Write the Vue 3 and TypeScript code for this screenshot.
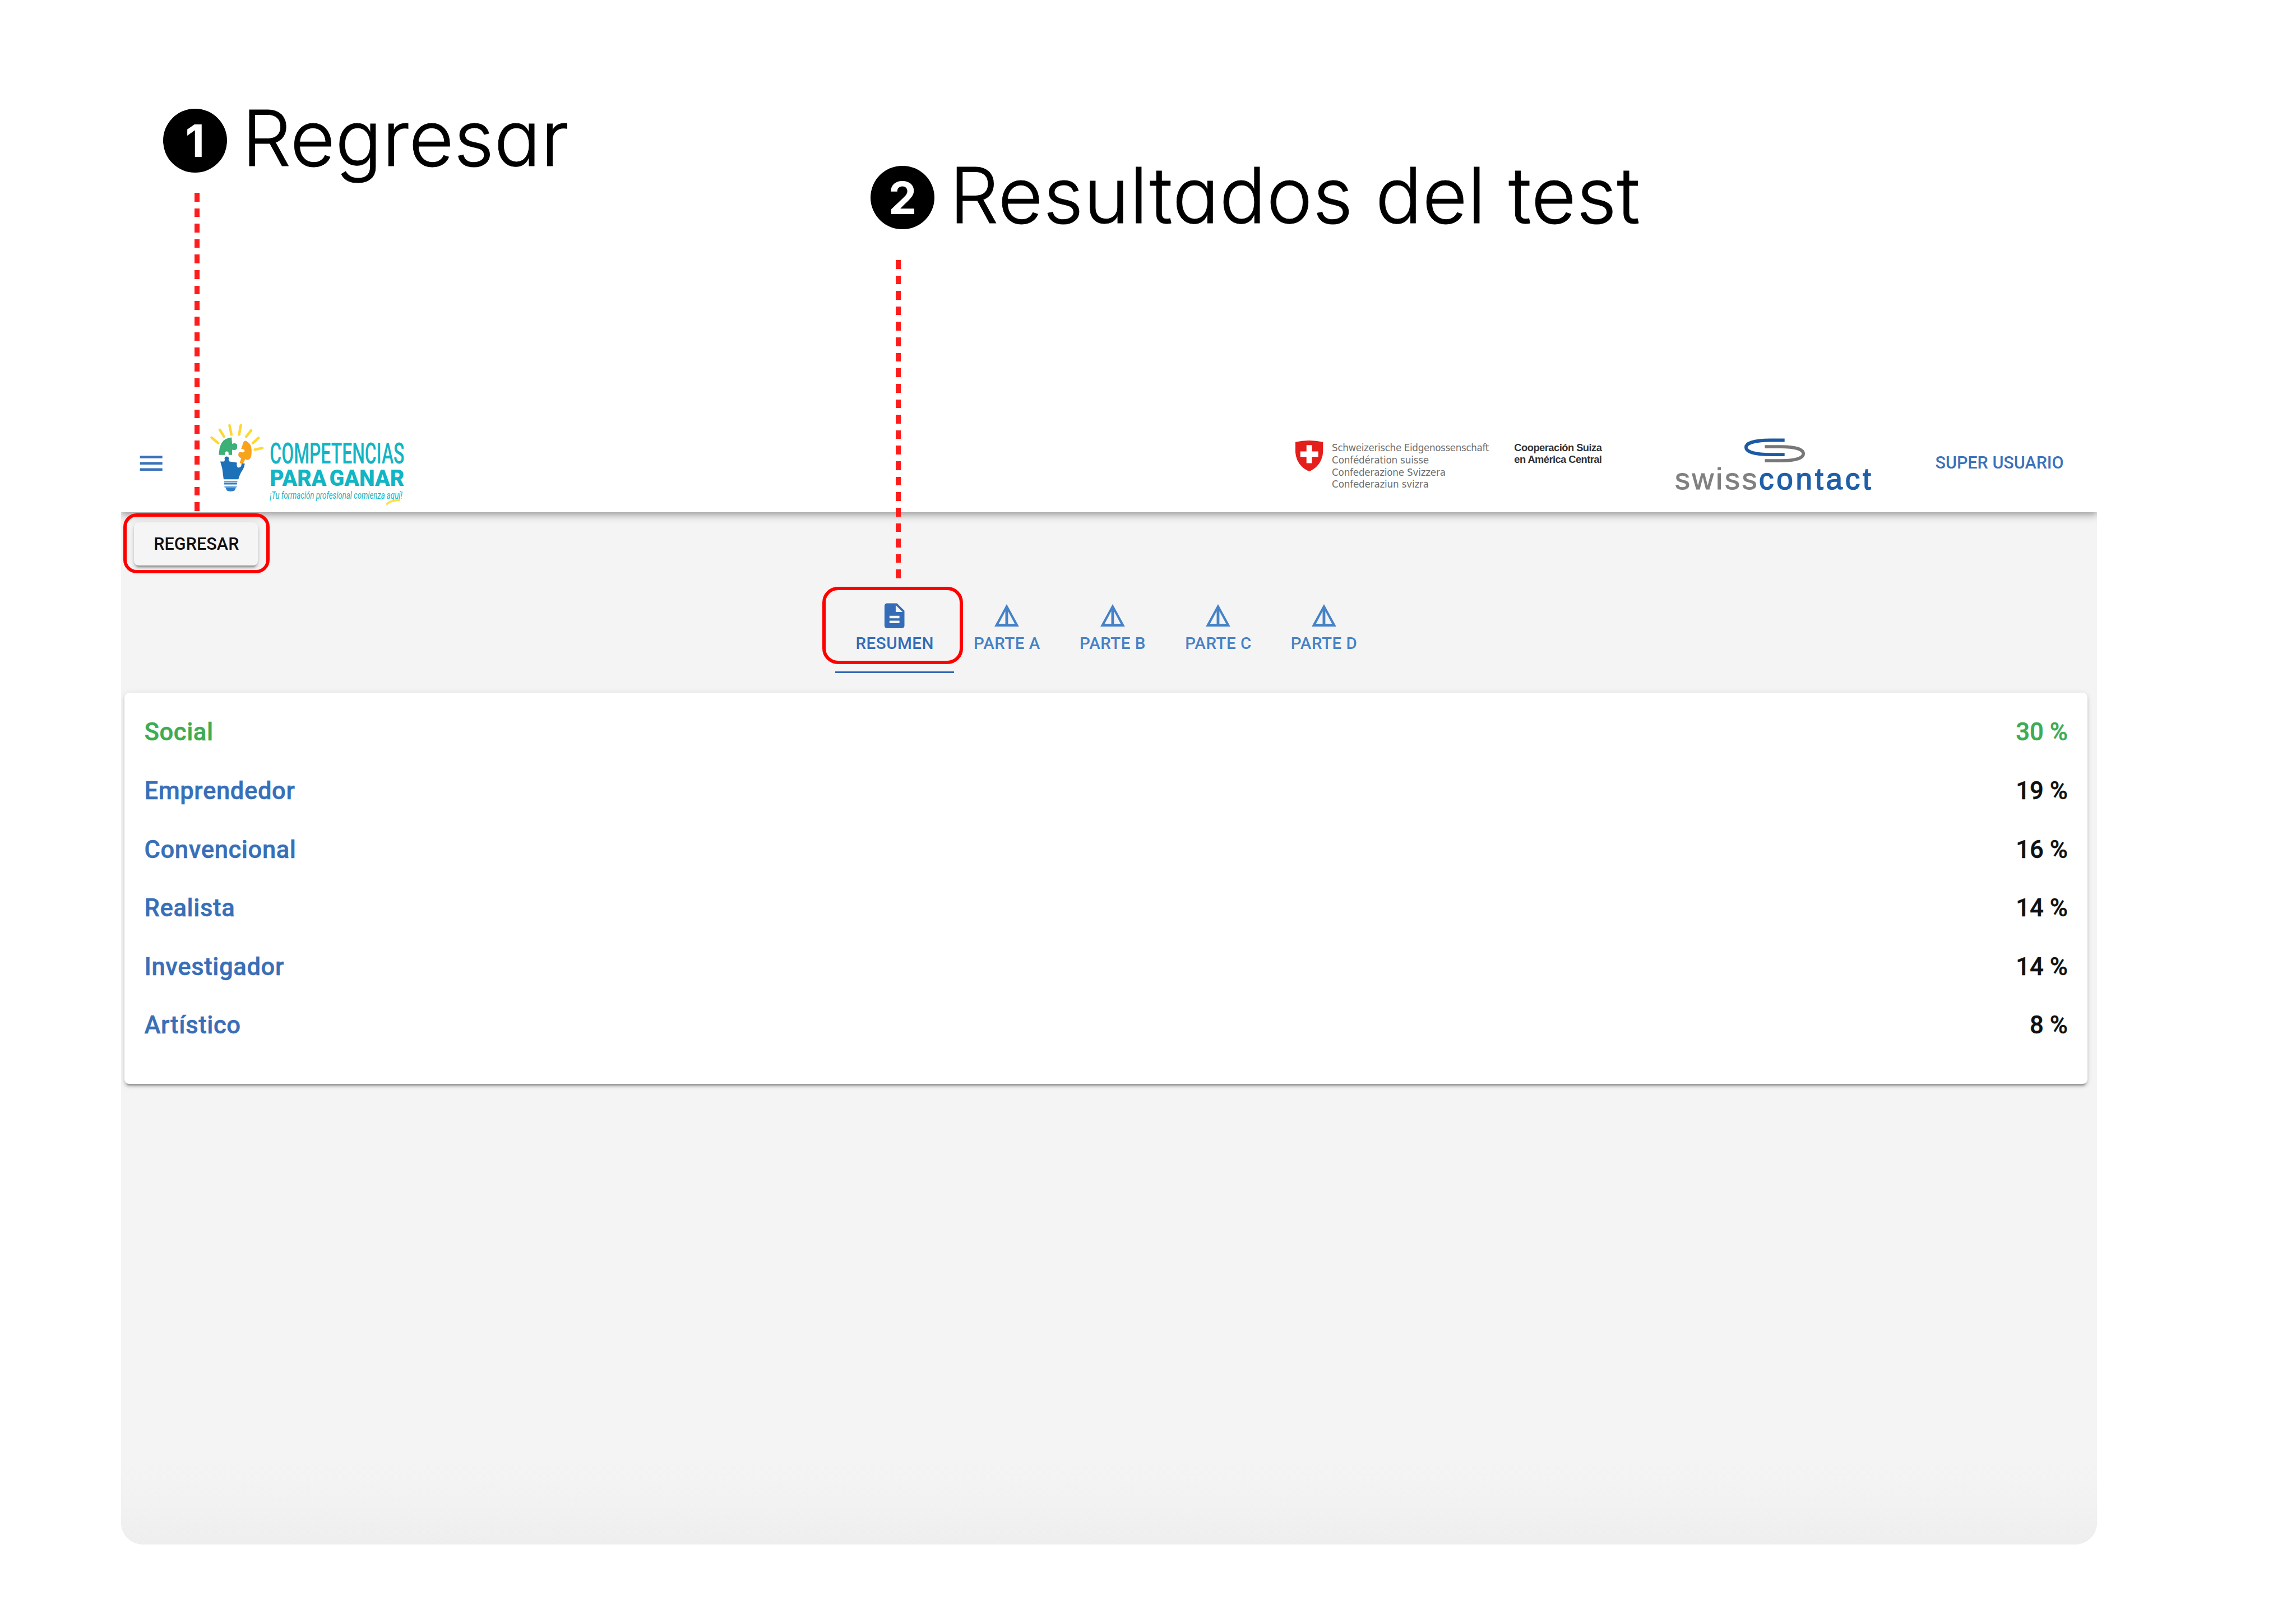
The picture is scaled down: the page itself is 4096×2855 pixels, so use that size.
<script setup lang="ts">
interface Tab {
  label: string
  active: boolean
}

interface Result {
  name: string
  value: number
}

const tabs: Tab[] = [
  { label: 'RESUMEN', active: true },
  { label: 'PARTE A', active: false },
  { label: 'PARTE B', active: false },
  { label: 'PARTE C', active: false },
  { label: 'PARTE D', active: false },
]

const results: Result[] = [
  { name: 'Social', value: 30 },
  { name: 'Emprendedor', value: 19 },
  { name: 'Convencional', value: 16 },
  { name: 'Realista', value: 14 },
  { name: 'Investigador', value: 14 },
  { name: 'Artístico', value: 8 },
]
</script>

<template>
  <div class="page">
    <section class="app">
      <header class="bar">
        <svg class="menu" viewBox="0 0 24 24"><path d="M3 18h18v-2H3v2zm0-5h18v-2H3v2zm0-7v2h18V6H3z" fill="#3a73ba" /></svg>

        <svg class="logo" viewBox="600 1198.4 600 302.05">
          <path fill="none" stroke="#fdd835" stroke-width="7.500" stroke-linecap="round" d="M620.500 1282L640 1298M644.500 1259L657 1279M673 1246L678.500 1273M706 1246L701 1273M736 1261L722 1279M758 1283L741 1298M769 1312.500L747 1317" />
          <path fill="#3cb077" d="M641.400 1332.700L644 1312Q648 1298 656 1290Q666 1283 679 1281.500L680.500 1300Q692 1296 695 1303Q697 1314 692 1317Q686 1320 680.500 1317L680.500 1332.700H670Q672 1323 665 1322Q658 1323 660 1332.700Z" />
          <path fill="#f9a31a" d="M714 1295Q719 1287 726 1295Q733 1299 736 1307Q739 1320 737 1333Q735 1345 728 1347Q722 1348 719 1345L713 1357H702.500L707.400 1342Q698 1340 698.800 1331Q699 1324 706 1324Q713 1327 717 1322Q719 1316 707 1315Z" />
          <path fill="#1d71b8" d="M646 1352H657Q661 1347 658 1342Q660 1337 665 1337Q671 1338 671 1343Q669 1348 673 1352L694.800 1355Q692 1369 700 1370Q709 1369 708 1357L717.700 1358Q716 1372 707 1383Q702 1393 698.800 1404H655.700L651.700 1373Z" />
          <path fill="#6fa8dc" d="M657 1408.500H696V1412H657ZM658 1424H694V1428H658Z" />
          <path fill="#2a7dc6" d="M657 1413.500H695V1419H657ZM661 1428H692L688 1437Q676 1442 665 1437Z" />
          <g fill="#12b5c3" font-family="Roboto, sans-serif">
            <text x="791" y="1358" font-size="85" font-weight="500" textLength="394" lengthAdjust="spacingAndGlyphs">COMPETENCIAS</text>
            <text x="791" y="1423.500" font-size="66" font-weight="900" word-spacing="-8" textLength="394" lengthAdjust="spacingAndGlyphs">PARA GANAR</text>
            <text x="791" y="1461" font-size="30" font-style="italic" textLength="388" lengthAdjust="spacingAndGlyphs">¡Tu formación profesional comienza aquí!</text>
          </g>
          <path d="M1132 1478Q1144 1465 1173 1465" fill="none" stroke="#fde047" stroke-width="6" />
        </svg>

        <svg class="swiss" viewBox="3780 1198.400 940 302.05">
          <path fill="#e41e1a" d="M3793 1295Q3833 1286 3874 1295V1325Q3872 1350 3856 1366Q3846 1376 3833.500 1381Q3821 1376 3811 1366Q3795 1350 3793 1325Z" />
          <path fill="#fff" d="M3825.500 1304H3841.500V1322.500H3860V1338.500H3841.500V1357H3825.500V1338.500H3807.500V1322.500H3825.500Z" />
          <g fill="#6f6f6f" font-family="'DejaVu Sans', sans-serif" font-size="27.500">
            <text x="3900" y="1321" textLength="460">Schweizerische Eidgenossenschaft</text>
            <text x="3900" y="1357" textLength="284">Confédération suisse</text>
            <text x="3900" y="1393.500" textLength="333">Confederazione Svizzera</text>
            <text x="3900" y="1429" textLength="284">Confederaziun svizra</text>
          </g>
          <g fill="#333" font-family="'Liberation Sans', sans-serif" font-size="30" font-weight="700">
            <text x="4434" y="1321" textLength="257">Cooperación Suiza</text>
            <text x="4434" y="1356.500" textLength="257">en América Central</text>
          </g>
        </svg>

        <svg class="contact" viewBox="4890 1198.400 610 302.05">
          <path d="M5226 1289.500H5185C5145 1289.500 5113 1296 5113 1310.500C5113 1325 5145 1331.500 5185 1331.500H5226" fill="none" stroke="#1c5aa3" stroke-width="9.500" />
          <path d="M5168 1308.500H5215C5255 1308.500 5281 1315 5281 1329C5281 1343 5255 1349.500 5215 1349.500H5168" fill="none" stroke="#777" stroke-width="9.500" />
          <g font-family="'Liberation Sans', sans-serif" font-size="87">
            <text x="4905" y="1433" fill="#808080" stroke="#808080" stroke-width="1.800" textLength="240">swiss</text>
            <text x="5151" y="1433" fill="#1f5fa8" stroke="#1f5fa8" stroke-width="2.500" textLength="328">contact</text>
          </g>
        </svg>

        <span class="user">SUPER USUARIO</span>
      </header>

      <main class="content">
        <button class="back">REGRESAR</button>

        <nav class="tabs">
          <div v-for="tab in tabs" :key="tab.label" class="tab" :class="{ active: tab.active }">
            <svg v-if="tab.active" class="doc" viewBox="0 0 24 24"><path fill="currentColor" d="M14 2H6c-1.100 0-1.990.9-1.990 2L4 20c0 1.100.89 2 1.990 2H18c1.100 0 2-.9 2-2V8l-6-6zm2 16H8v-2h8v2zm0-4H8v-2h8v2zm-3-5V3.500L18.500 9H13z" /></svg>
            <svg v-else class="tri" viewBox="0 0 72 88"><path fill="currentColor" fill-rule="evenodd" d="M36 10L72 76H0ZM32 31L12.500 67.500H32ZM40 31V67.500H59.500Z" /></svg>
            <span>{{ tab.label }}</span>
          </div>
        </nav>

        <div class="card">
          <div v-for="(r, i) in results" :key="r.name" class="row" :class="{ top: i === 0 }">
            <span class="name">{{ r.name }}</span>
            <span class="value">{{ r.value }} %</span>
          </div>
        </div>
      </main>
    </section>

    <div class="note first"><span class="dot">1</span><span class="label">Regresar</span></div>
    <div class="note second"><span class="dot">2</span><span class="label">Resultados del test</span></div>
    <i class="leader leader-a"></i>
    <i class="leader leader-b"></i>
    <i class="mark mark-a"></i>
    <i class="mark mark-b"></i>
  </div>
</template>

<style>
body {
  background: #fff;
}
</style>

<style scoped>
.page {
  position: relative;
  width: 4096px;
  height: 2855px;
  overflow: hidden;
  background: #fff;
  font-family: Roboto, sans-serif;
}

.app {
  display: flex;
  flex-direction: column;
  width: 3525.200px;
  height: 2025.800px;
  margin: 730px 0 0 216.200px;
  overflow: hidden;
  border-radius: 0 0 39px 39px;
  background: #f4f4f4;
}

.bar {
  position: relative;
  display: flex;
  flex: none;
  align-items: flex-start;
  box-sizing: border-box;
  height: 184px;
  padding: 0 60.900px 0 27px;
  background: #fff;
  box-shadow:
    0 4.400px 8.700px -2.200px rgba(0, 0, 0, 0.2),
    0 8.700px 10.900px 0 rgba(0, 0, 0, 0.14),
    0 2.200px 21.800px 0 rgba(0, 0, 0, 0.12);
}

.menu {
  width: 53.400px;
  height: 53.400px;
  margin-top: 70px;
}

.logo {
  width: 365.500px;
  height: 184px;
  margin-left: 68.800px;
  overflow: visible;
}

.swiss {
  width: 572.600px;
  height: 184px;
  margin-left: auto;
}

.contact {
  width: 371.600px;
  height: 184px;
  margin-left: 103.600px;
}

.user {
  width: 228px;
  margin: 73.500px 0 0 102.100px;
  color: #3a73ba;
  font-size: 30.500px;
  font-weight: 500;
  line-height: 44px;
  white-space: nowrap;
}

.content {
  display: flex;
  flex: 1;
  flex-direction: column;
  background: linear-gradient(#f4f4f4 0, #f4f4f4 92%, #f2f2f2 96%, #eee 100%);
}

.back {
  width: 221.300px;
  height: 77.800px;
  margin: 17.500px 0 0 23px;
  padding: 0 0 0 1px;
  border: 0;
  border-radius: 8.700px;
  background: #f5f5f5;
  color: #111;
  font: 500 30.500px/77px Roboto, sans-serif;
  letter-spacing: 0.1px;
  box-shadow:
    0 6.500px 2.200px -4.400px rgba(0, 0, 0, 0.2),
    0 4.400px 4.400px 0 rgba(0, 0, 0, 0.14),
    0 2.200px 10.900px 0 rgba(0, 0, 0, 0.12);
}

.tabs {
  display: flex;
  height: 157px;
  margin: 34.900px 0 0 1274px;
}

.tab {
  display: flex;
  flex-direction: column;
  align-items: center;
  box-sizing: border-box;
  width: 188.500px;
  padding-top: 27.500px;
  color: #4682c7;
  font-size: 29.500px;
  font-weight: 500;
  line-height: 46px;
  letter-spacing: 0.5px;
  white-space: nowrap;
}

.tab.active {
  width: 212px;
  border-bottom: 3px solid #3068b4;
  color: #346cb7;
}

.doc {
  width: 53.400px;
  height: 53.400px;
}

.tri {
  width: 43.900px;
  height: 53.400px;
}

.card {
  box-sizing: border-box;
  width: 3502px;
  height: 698.200px;
  margin: 34.600px 0 0 6.100px;
  padding: 19.600px 35.500px 0 35.200px;
  border-radius: 8.700px;
  background: #fff;
  box-shadow:
    0 6.500px 2.200px -4.400px rgba(0, 0, 0, 0.2),
    0 4.400px 4.400px 0 rgba(0, 0, 0, 0.14),
    0 2.200px 10.900px 0 rgba(0, 0, 0, 0.12);
}

.row {
  display: flex;
  justify-content: space-between;
  height: 104.600px;
  color: #386fb8;
  font-size: 43.600px;
  font-weight: 500;
  line-height: 104.600px;
  -webkit-text-stroke: 0.500px currentColor;
}

.name {
  letter-spacing: 0.6px;
}

.value {
  color: #111;
}

.top,
.top .value {
  color: #3dac53;
}

.note {
  position: absolute;
  display: flex;
  align-items: center;
  color: #000;
  font-family: Inter, sans-serif;
}

.first {
  top: 193.900px;
  left: 291px;
}

.second {
  top: 295.500px;
  left: 1553.300px;
}

.dot {
  width: 113.700px;
  height: 113.700px;
  border-radius: 50%;
  background: #000;
  color: #fff;
  font-size: 80px;
  font-weight: 700;
  line-height: 113px;
  text-align: center;
}

.label {
  margin: 0 0 10px 27px;
  font-size: 138px;
  font-weight: 300;
  line-height: 104px;
  letter-spacing: 0.4px;
  font-feature-settings: 'cv11';
  white-space: nowrap;
  -webkit-text-stroke: 1px #000;
}

.second .label {
  letter-spacing: 0.8px;
}

.leader {
  position: absolute;
  width: 9.100px;
  height: 568.600px;
  background: repeating-linear-gradient(#ff1c1c 0, #ff1c1c 15.600px, transparent 15.600px, transparent 27.625px);
}

.leader-a {
  top: 344.400px;
  left: 347.400px;
}

.leader-b {
  top: 463.600px;
  left: 1598px;
}

.mark {
  position: absolute;
  box-sizing: border-box;
  border: 6px solid #f00;
}

.mark-a {
  top: 915.600px;
  left: 220px;
  width: 261.200px;
  height: 107.800px;
  border-radius: 24px;
}

.mark-b {
  top: 1047px;
  left: 1466.500px;
  width: 251px;
  height: 138.400px;
  border-radius: 28px;
}
</style>
